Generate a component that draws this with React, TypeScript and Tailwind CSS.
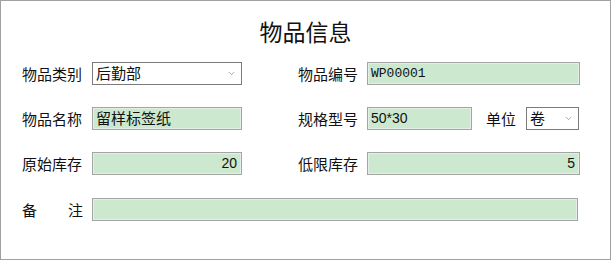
import { ChevronDown } from "lucide-react";

const cjk = { fontFamily: '"Noto Sans CJK SC", "Noto Sans", sans-serif' };

function Label({ children, w = "w-[62px]" }: { children: React.ReactNode; w?: string }) {
  return <div className={`${w} shrink-0 text-[15px] leading-[23px] text-[#111]`}>{children}</div>;
}

function Field({
  value,
  w,
  align = "left",
  mono = false,
  className = "",
}: {
  value?: string;
  w: string;
  align?: "left" | "right";
  mono?: boolean;
  className?: string;
}) {
  return (
    <div
      className={`${w} ${className} h-[23px] shrink-0 border border-[#a4a4a4] bg-[#cce8cf] shadow-[inset_0_0_0_1px_#e4efe5] flex items-center px-[3px] text-[14px] text-[#111] ${
        align === "right" ? "justify-end pr-[4px]" : ""
      }`}
      style={mono ? { fontFamily: '"Liberation Mono", monospace', fontSize: 13 } : { fontFamily: '"Liberation Sans", "Noto Sans CJK SC", sans-serif' }}
    >
      {value}
    </div>
  );
}

function Select({ value, w, className = "" }: { value: string; w: string; className?: string }) {
  return (
    <div
      className={`${w} ${className} h-[23px] shrink-0 border border-[#7a7a7a] bg-white flex items-center justify-between pl-[3px] pr-[5px] text-[15px] text-[#111]`}
    >
      <span>{value}</span>
      <ChevronDown size={9} strokeWidth={1.5} className="text-[#666]" />
    </div>
  );
}

export default function App() {
  return (
    <div className="w-[611px] h-[260px] border border-[#a0a0a0] bg-white" style={cjk}>
      <h1 className="pt-[16px] text-center text-[23px] leading-[28px] text-[#111]">物品信息</h1>

      <div className="mt-[17px] pl-[21px] flex flex-col gap-[22px]">
        <div className="flex items-center">
          <Label>物品类别</Label>
          <Select value="后勤部" w="w-[150px]" className="ml-[8px]" />
          <div className="ml-[56px]">
            <Label>物品编号</Label>
          </div>
          <Field value="WP00001" w="w-[213px]" mono className="ml-[7px]" />
        </div>

        <div className="flex items-center">
          <Label>物品名称</Label>
          <div className="ml-[8px] w-[150px] h-[23px] shrink-0 border border-[#a4a4a4] bg-[#cce8cf] shadow-[inset_0_0_0_1px_#e4efe5] flex items-center px-[3px] text-[15px] text-[#111]">
            留样标签纸
          </div>
          <div className="ml-[56px]">
            <Label>规格型号</Label>
          </div>
          <Field value="50*30" w="w-[105px]" className="ml-[7px]" />
          <div className="ml-[14px]">
            <Label w="w-[31px]">单位</Label>
          </div>
          <Select value="卷" w="w-[53px]" className="ml-[9px]" />
        </div>

        <div className="flex items-center">
          <Label>原始库存</Label>
          <Field value="20" w="w-[150px]" align="right" className="ml-[8px]" />
          <div className="ml-[56px]">
            <Label>低限库存</Label>
          </div>
          <Field value="5" w="w-[213px]" align="right" className="ml-[7px]" />
        </div>

        <div className="flex items-center mt-[1px]">
          <Label>
            <div className="flex justify-between pr-[1px]">
              <span>备</span>
              <span>注</span>
            </div>
          </Label>
          <Field w="w-[486px]" className="ml-[8px]" />
        </div>
      </div>
    </div>
  );
}
